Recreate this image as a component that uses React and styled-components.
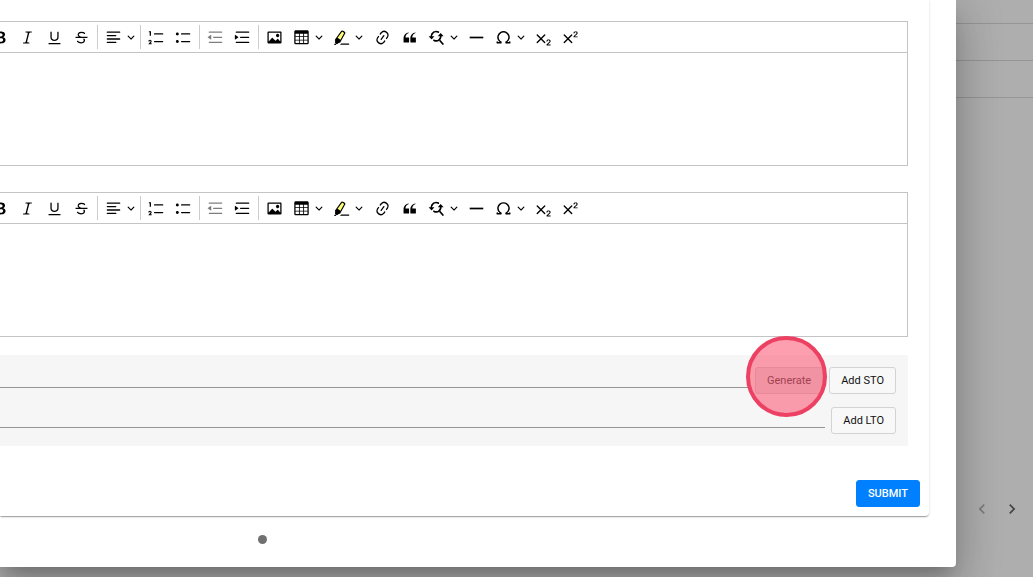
import React from 'react';
import styled, { createGlobalStyle } from 'styled-components';

const GlobalStyle = createGlobalStyle`
    * {
        box-sizing: border-box;
    }
    body {
        margin: 0;
        background: #aeaeae;
        font-family: Roboto, "Liberation Sans", sans-serif;
        overflow: hidden;
    }
`;

const Page = styled.div`
    display: flex;
    align-items: stretch;
    min-height: 100vh;
`;
const Dialog = styled.main`
    flex: 1;
    min-width: 0;
    align-self: flex-start;
    z-index: 1;
    padding-right: 27px;
    background: #fff;
    border-radius: 0 0 4px 0;
    box-shadow: 0 11px 15px -7px rgba(0, 0, 0, 0.2),
        0 24px 38px 3px rgba(0, 0, 0, 0.14),
        0 9px 46px 8px rgba(0, 0, 0, 0.12);
`;
const Card = styled.form`
    border-radius: 0 0 4px 0;
    box-shadow: 0 2px 1px -1px rgba(0, 0, 0, 0.2),
        0 1px 1px rgba(0, 0, 0, 0.14),
        0 1px 3px rgba(0, 0, 0, 0.12);
`;
const CardBody = styled.div`
    padding: 21px 21px 0 0;
`;

// Rich text editor
const Editor = styled.section`
    margin-bottom: ${props => (props.$last ? 18 : 26)}px;
    border: 1px solid #c4c4c4;
    border-left: none;
`;
const Toolbar = styled.div`
    display: flex;
    height: 31px;
    margin-left: -13px;
    border-bottom: 1px solid #c4c4c4;
`;
const Separator = styled.span`
    width: 1px;
    margin: 3px 2px;
    background: #ccc;
`;
const Tool = styled.button`
    display: flex;
    flex: none;
    align-items: center;
    gap: 5px;
    width: ${props => props.$width || 27}px;
    padding: 0 5px;
    border: none;
    background: none;
    color: #000;

    &:disabled {
        opacity: 0.5;
    }
`;
const Icon = styled.svg`
    flex: none;
    width: 17px;
    height: 17px;
    fill: currentColor;
`;
const Arrow = styled.svg`
    flex: none;
    width: 8px;
    height: 8px;
    fill: currentColor;
`;
const TextArea = styled.textarea`
    display: block;
    width: 100%;
    height: 112px;
    padding: 8px;
    border: none;
    outline: none;
    resize: none;
    font: 13px Roboto, sans-serif;
`;

// Objectives
const Objectives = styled.div`
    display: flex;
    flex-direction: column;
    gap: 13px;
    padding: 12px;
    background: #f6f6f6;
`;
const ObjectiveRow = styled.div`
    display: flex;
    align-items: flex-start;
    gap: 6px;
    margin-left: -12px;
`;
const LineInput = styled.input`
    flex: 1;
    min-width: 0;
    height: 21px;
    padding: 0;
    border: none;
    border-bottom: 1px solid #949494;
    border-radius: 0;
    outline: none;
    background: none;
    font: 13px Roboto, sans-serif;
`;
const Button = styled.button`
    height: 27px;
    padding: 0 11px;
    border: 1px solid #d3d3d3;
    border-radius: 3px;
    background: #f8f8f8;
    color: #111;
    font: 400 11px Roboto, sans-serif;
`;
const GenerateButton = styled(Button)`
    background: #e6e6e6;
    color: #444;
`;
const SubmitButton = styled(Button)`
    border-color: #0080ff;
    background: #0080ff;
    color: #fff;
    font-weight: 500;
`;
const Highlighted = styled.div`
    position: relative;
    display: flex;
`;
const Ring = styled.span`
    position: absolute;
    top: -31px;
    left: -9px;
    width: 81px;
    height: 81px;
    border: 4px solid #ec4163;
    border-radius: 50%;
    background: rgba(252, 64, 96, 0.5);
    pointer-events: none;
`;
const Actions = styled.div`
    display: flex;
    justify-content: flex-end;
    padding: 34px 9px 9px;
`;
const Steps = styled.div`
    display: flex;
    padding: 19px 0 23px 258px;
`;
const Dot = styled.span`
    width: 9px;
    height: 9px;
    border-radius: 50%;
    background: #707070;
`;

// Page behind the dialog
const Backdrop = styled.aside`
    display: flex;
    flex-direction: column;
    width: 77px;
`;
const BackRow = styled.div`
    height: ${props => props.$height || 37}px;
    border-bottom: 1px solid #959595;
`;
const Pager = styled.nav`
    display: flex;
    gap: 6px;
    margin: auto 0 56px 14px;
`;
const PageButton = styled.button`
    display: flex;
    align-items: center;
    justify-content: center;
    width: 24px;
    height: 24px;
    padding: 0;
    border: none;
    background: none;
    color: #444;

    &:disabled {
        color: #7b7b7b;
    }
`;
const Chevron = styled.svg`
    width: 20px;
    height: 20px;
    fill: currentColor;
`;

const two = 'M15.177 18.178h2.549c.254 0 .447.05.58.152a.49.49 0 0 1 .201.413.54.54 0 0 1-.159.393c-.105.108-.266.162-.48.162h-3.594c-.245 0-.435-.066-.572-.197a.621.621 0 0 1-.205-.463c0-.114.044-.265.132-.453a1.62 1.62 0 0 1 .288-.444c.433-.436.824-.81 1.172-1.122.348-.312.597-.517.747-.615.267-.183.49-.368.667-.553.177-.185.312-.375.405-.57.093-.194.139-.384.139-.57a1.008 1.008 0 0 0-.554-.917 1.197 1.197 0 0 0-.56-.133c-.426 0-.761.182-1.005.546a2.332 2.332 0 0 0-.164.39 1.609 1.609 0 0 1-.258.488c-.096.114-.237.17-.423.17a.558.558 0 0 1-.405-.156.568.568 0 0 1-.161-.427c0-.218.05-.446.151-.683.101-.238.252-.453.452-.646s.454-.349.762-.467a2.998 2.998 0 0 1 1.081-.178c.498 0 .923.076 1.274.228a1.916 1.916 0 0 1 1.004 1.032 1.984 1.984 0 0 1-.156 1.794c-.2.32-.405.572-.613.754-.208.182-.558.468-1.048.857-.49.39-.826.691-1.008.906a2.703 2.703 0 0 0-.24.309z';
const cross = 'm7.03 10.349 3.818-3.819a.8.8 0 1 1 1.132 1.132L8.16 11.48l3.819 3.818a.8.8 0 1 1-1.132 1.132L7.03 12.61l-3.818 3.82a.8.8 0 1 1-1.132-1.132L5.9 11.48 2.08 7.662A.8.8 0 1 1 3.212 6.53l3.818 3.82z';
const indentLines = 'M2 3.75c0 .414.336.75.75.75h14.5a.75.75 0 1 0 0-1.5H2.75a.75.75 0 0 0-.75.75zm5 6c0 .414.336.75.75.75h9.5a.75.75 0 1 0 0-1.5h-9.5a.75.75 0 0 0-.75.75zM2.75 16.5h14.5a.75.75 0 1 0 0-1.5H2.75a.75.75 0 1 0 0 1.5z';

const icons = {
  bold: <path d="M10.187 17H5.773c-.637 0-1.092-.138-1.364-.415-.273-.277-.409-.718-.409-1.323V4.738c0-.617.14-1.062.419-1.332.279-.27.73-.406 1.354-.406h4.68c.69 0 1.288.041 1.793.124.506.083.96.242 1.36.478.341.197.644.447.906.75a3.262 3.262 0 0 1 .808 2.162c0 1.401-.722 2.426-2.167 3.075C15.05 10.175 16 11.315 16 13.01a3.756 3.756 0 0 1-2.296 3.504 6.1 6.1 0 0 1-1.517.377c-.571.073-1.238.11-2 .11zm-.217-6.217H7v4.087h3.069c1.977 0 2.965-.69 2.965-2.072 0-.707-.256-1.22-.768-1.537-.512-.319-1.277-.478-2.296-.478zM7 5.13v3.619h2.606c.729 0 1.292-.067 1.69-.2a1.6 1.6 0 0 0 .91-.765c.165-.267.247-.566.247-.897 0-.707-.26-1.176-.778-1.409-.519-.232-1.31-.348-2.375-.348H7z" />,
  italic: <path d="m9.586 14.633.021.004c-.036.335.095.655.393.962.082.083.173.15.274.201h1.474a.6.6 0 1 1 0 1.2H5.304a.6.6 0 0 1 0-1.2h1.15c.474-.07.809-.182 1.005-.334.157-.122.291-.32.404-.597l2.416-9.55a1.053 1.053 0 0 0-.281-.823 1.12 1.12 0 0 0-.442-.296H8.15a.6.6 0 0 1 0-1.2h6.443a.6.6 0 1 1 0 1.2h-1.195c-.376.056-.65.155-.823.296-.215.175-.423.439-.623.79l-2.366 9.347z" />,
  underline: <path d="M3 18v-1.5h14V18zm2.2-8V3.6c0-.4.4-.6.8-.6.3 0 .7.2.7.6v6.2c0 2 1.3 2.8 3.2 2.8 1.9 0 3.4-.9 3.4-2.9V3.6c0-.3.4-.5.8-.5.3 0 .7.2.7.5V10c0 2.7-2.2 4-4.9 4-2.6 0-4.7-1.2-4.7-4z" />,
  strike: <path d="M7 16.4c-.8-.4-1.5-.9-2.2-1.5a.6.6 0 0 1-.2-.5l.3-.6h1c1 1.2 2.1 1.7 3.7 1.7 1 0 1.8-.3 2.3-.6.6-.4.6-1.2.6-1.3.2-1.2-.9-2.1-.9-2.1h2.1c.3.7.4 1.2.4 1.7v.8l-.6 1.2c-.6.8-1.1 1-1.6 1.2a6 6 0 0 1-2.4.6c-1 0-1.8-.3-2.5-.6zM6.8 9 6 8.3c-.4-.5-.5-.8-.5-1.6 0-.7.1-1.3.5-1.8.4-.6 1-1 1.6-1.3a6.3 6.3 0 0 1 4.7 0 4 4 0 0 1 1.7 1l.3.7c0 .1.2.4-.2.7-.4.2-.9.1-1 0a3 3 0 0 0-1.2-1c-.4-.2-1-.3-2-.4-.7 0-1.4.2-2 .6-.8.6-1 .8-1 1.5 0 .8.5 1 1.2 1.5.6.4 1.1.7 1.9 1H6.8zM3 10.5V9h14v1.5z" />,
  align: <path d="M2 3.75c0 .414.336.75.75.75h14.5a.75.75 0 1 0 0-1.5H2.75a.75.75 0 0 0-.75.75zm0 8c0 .414.336.75.75.75h14.5a.75.75 0 1 0 0-1.5H2.75a.75.75 0 0 0-.75.75zm0 4c0 .414.336.75.75.75h9.929a.75.75 0 1 0 0-1.5H2.75a.75.75 0 0 0-.75.75zm0-8c0 .414.336.75.75.75h9.929a.75.75 0 1 0 0-1.5H2.75a.75.75 0 0 0-.75.75z" />,
  numbered: <path d="M7 5.75c0 .414.336.75.75.75h9.5a.75.75 0 1 0 0-1.5h-9.5a.75.75 0 0 0-.75.75zM3.5 3v5H2V3.7H1v-1h2.5V3zM.343 17.857l2.59-3.257H2.92a.6.6 0 1 0-1.04 0H.302a2 2 0 1 1 3.995 0h-.001c-.048.405-.16.734-.333.988-.175.254-.59.692-1.244 1.312H4.3v1h-4l.043-.043zM7 14.75a.75.75 0 0 1 .75-.75h9.5a.75.75 0 1 1 0 1.5h-9.5a.75.75 0 0 1-.75-.75z" />,
  bulleted: <path d="M7 5.75c0 .414.336.75.75.75h9.5a.75.75 0 1 0 0-1.5h-9.5a.75.75 0 0 0-.75.75zm-6 0C1 4.784 1.777 4 2.75 4c.966 0 1.75.777 1.75 1.75 0 .966-.777 1.75-1.75 1.75C1.784 7.5 1 6.723 1 5.75zm6 9c0 .414.336.75.75.75h9.5a.75.75 0 1 0 0-1.5h-9.5a.75.75 0 0 0-.75.75zm-6 0c0-.966.777-1.75 1.75-1.75.966 0 1.75.777 1.75 1.75 0 .966-.777 1.75-1.75 1.75-.966 0-1.75-.777-1.75-1.75z" />,
  outdent: <path d={indentLines + 'M4.368 6.95.98 9.358a.4.4 0 0 0 .013.661l3.39 2.207A.4.4 0 0 0 5 11.892V7.275a.4.4 0 0 0-.632-.326z'} />,
  indent: <path d={indentLines + 'M1.632 6.95 5.02 9.358a.4.4 0 0 1-.013.661l-3.39 2.207A.4.4 0 0 1 1 11.892V7.275a.4.4 0 0 1 .632-.326z'} />,
  image: <path d="M6.91 10.54c.26-.23.64-.21.88.03l3.36 3.14 2.23-2.06a.64.64 0 0 1 .87 0l2.52 2.97V4.5H3.2v10.12l3.71-4.08zm10.27-7.51c.6 0 1.09.47 1.09 1.05v11.84c0 .59-.49 1.06-1.09 1.06H2.79c-.6 0-1.09-.47-1.09-1.06V4.08c0-.58.49-1.05 1.1-1.05h14.38zm-5.22 5.56a1.96 1.96 0 1 1 3.4-1.96 1.96 1.96 0 0 1-3.4 1.96z" />,
  table: <path d="M3 5.5v3h4v-3H3zm0 4v3h4v-3H3zm0 4v3h4v-3H3zm5 3h4v-3H8v3zm5 0h4v-3h-4v3zm4-4v-3h-4v3h4zm0-4v-3h-4v3h4zm1.5 8A1.5 1.5 0 0 1 17 18H3a1.5 1.5 0 0 1-1.5-1.5V3c.222-.863 1.068-1.5 2-1.5h13c.932 0 1.778.637 2 1.5v13.5zM12 12.5v-3H8v3h4zm0-4v-3H8v3h4z" />,
  highlight: (
    <>
      <path fill="#fdfd77" d="M10.798 1.59 3.002 12.875l1.895 1.852 2.521 1.402 6.997-12.194z" />
      <path d="m2.556 16.727.234-.348c-.297-.151-.462-.293-.498-.426-.036-.137.002-.416.115-.837.094-.25.15-.449.169-.595a4.495 4.495 0 0 0 0-.725c-.209-.621-.303-1.041-.284-1.26.02-.218.178-.506.475-.862l6.77-9.414c.539-.91 1.605-.85 3.199.18 1.594 1.032 2.188 1.928 1.784 2.686l-5.877 10.36c-.158.412-.333.673-.526.782-.193.108-.604.179-1.232.21-.362.131-.608.237-.738.318-.13.081-.305.238-.526.47-.293.265-.504.397-.632.397-.096 0-.27-.075-.524-.226l-.31.41-1.6-1.12zm-.279.415 1.575 1.103-.392.515H1.19l1.087-1.618zm8.1-13.656-4.953 6.9L8.75 12.57l4.247-7.574c.175-.25-.188-.647-1.092-1.192-.903-.546-1.412-.652-1.528-.318zM8.244 18.5 9.59 17h9.406v1.5H8.245z" />
    </>
  ),
  link: <path d="m11.077 15 .991-1.416a.75.75 0 1 1 1.229.86l-1.148 1.64a.748.748 0 0 1-.217.206 5.251 5.251 0 0 1-8.503-5.955.741.741 0 0 1 .12-.274l1.147-1.639a.75.75 0 1 1 1.228.86L4.933 10.7l.006.003a3.75 3.75 0 0 0 6.132 4.294l.006.004zm5.494-5.335a.748.748 0 0 1-.12.274l-1.147 1.639a.75.75 0 1 1-1.228-.86l.86-1.23a3.75 3.75 0 0 0-6.144-4.301l-.86 1.229a.75.75 0 0 1-1.229-.86l1.148-1.64a.748.748 0 0 1 .217-.206 5.251 5.251 0 0 1 8.503 5.955zm-4.563-2.532a.75.75 0 0 1 .184 1.045l-3.155 4.505a.75.75 0 1 1-1.229-.86l3.155-4.506a.75.75 0 0 1 1.045-.184z" />,
  quote: <path d="M3 10.423a6.5 6.5 0 0 1 6.056-6.408l.038.67C6.448 5.423 5.354 7.663 5.22 10H9c.552 0 .5.432.5.986v4.511c0 .554-.448.503-1 .503h-5c-.552 0-.5-.449-.5-1.003v-4.574zm8 0a6.5 6.5 0 0 1 6.056-6.408l.038.67c-2.646.739-3.74 2.979-3.873 5.315H17c.552 0 .5.432.5.986v4.511c0 .554-.448.503-1 .503h-5c-.552 0-.5-.449-.5-1.003v-4.574z" />,
  replace: (
    <>
      <path d="m12.87 13.786 1.532-1.286 3.857 4.596a1 1 0 1 1-1.532 1.286l-3.857-4.596z" />
      <path d="M16.004 8.5a6.5 6.5 0 0 1-9.216 5.905c-1.154-.53-.863-1.415-.663-1.615.194-.194.564-.592 1.635-.141a4.5 4.5 0 0 0 5.89-5.904l-.104-.227 1.332-1.331c.045-.046.196-.041.224.007a6.47 6.47 0 0 1 .902 3.306zm-3.4-5.715c.562.305.742 1.106.354 1.494-.388.388-.995.414-1.476.178a4.5 4.5 0 0 0-6.086 5.882l.114.236-1.348 1.349c-.038.037-.17.022-.198-.023a6.5 6.5 0 0 1 5.54-9.9 6.469 6.469 0 0 1 3.1.784z" />
      <path d="M4.001 11.93.948 8.877a.2.2 0 0 1 .141-.341h6.106a.2.2 0 0 1 .141.341L4.283 11.93a.2.2 0 0 1-.282 0zm11.083-6.789 3.053 3.053a.2.2 0 0 1-.14.342H11.89a.2.2 0 0 1-.14-.342l3.052-3.053a.2.2 0 0 1 .282 0z" />
    </>
  ),
  rule: <path d="M2 9h16v2H2z" />,
  omega: <path d="M10 2.5a7.47 7.47 0 0 1 4.231 1.31 7.268 7.268 0 0 1 2.703 3.454 7.128 7.128 0 0 1 .199 4.353c-.39 1.436-1.475 2.72-2.633 3.677h2.013c0-.226.092-.443.254-.603a.876.876 0 0 1 1.229 0c.163.16.254.377.254.603v.853c0 .209-.078.41-.22.567a.873.873 0 0 1-.547.28l-.101.006h-4.695a.517.517 0 0 1-.516-.518v-1.265c0-.21.128-.398.317-.489a5.601 5.601 0 0 0 2.492-2.371 5.459 5.459 0 0 0 .552-3.693 5.53 5.53 0 0 0-1.955-3.2A5.71 5.71 0 0 0 10 4.206 5.708 5.708 0 0 0 6.419 5.46 5.527 5.527 0 0 0 4.46 8.663a5.457 5.457 0 0 0 .554 3.695 5.6 5.6 0 0 0 2.497 2.37.55.55 0 0 1 .317.49v1.264c0 .286-.23.518-.516.518H2.618a.877.877 0 0 1-.614-.25.845.845 0 0 1-.254-.603v-.853c0-.226.091-.443.254-.603a.876.876 0 0 1 1.228 0c.163.16.255.377.255.603h1.925c-1.158-.958-2.155-2.241-2.545-3.678a7.128 7.128 0 0 1 .199-4.352 7.268 7.268 0 0 1 2.703-3.455A7.475 7.475 0 0 1 10 2.5z" />,
  sub: (
    <>
      <path d={cross} />
      <path d={two} />
    </>
  ),
  sup: (
    <>
      <path d={cross} />
      <path d={two} transform="translate(0 -9.5)" />
    </>
  ),
};

const tools = [
  { icon: 'bold', label: 'Bold' },
  { icon: 'italic', label: 'Italic' },
  { icon: 'underline', label: 'Underline' },
  { icon: 'strike', label: 'Strikethrough' },
  null,
  { icon: 'align', label: 'Text alignment', width: 38 },
  null,
  { icon: 'numbered', label: 'Numbered List' },
  { icon: 'bulleted', label: 'Bulleted List' },
  null,
  { icon: 'outdent', label: 'Decrease indent', disabled: true },
  { icon: 'indent', label: 'Increase indent' },
  null,
  { icon: 'image', label: 'Insert image' },
  { icon: 'table', label: 'Insert table', width: 40 },
  { icon: 'highlight', label: 'Highlight', width: 41 },
  { icon: 'link', label: 'Link' },
  { icon: 'quote', label: 'Block quote' },
  { icon: 'replace', label: 'Find and replace', width: 40 },
  { icon: 'rule', label: 'Horizontal line' },
  { icon: 'omega', label: 'Special characters', width: 40 },
  { icon: 'sub', label: 'Subscript' },
  { icon: 'sup', label: 'Superscript' },
];

const RichText = props => {
  return (
    <Editor $last={props.last}>
      <Toolbar role="toolbar" aria-label="Editor toolbar">
        {tools.map((tool, i) => tool ? (
          <Tool key={i} type="button" aria-label={tool.label} disabled={tool.disabled} $width={tool.width}>
            <Icon viewBox="0 0 20 20">{icons[tool.icon]}</Icon>
            {tool.width && (
              <Arrow viewBox="0 0 10 10">
                <path d="M.941 4.523a.75.75 0 1 1 1.06-1.06l3.006 3.005 3.005-3.005a.75.75 0 1 1 1.06 1.06l-3.549 3.55a.75.75 0 0 1-1.168-.136L.941 4.523z" />
              </Arrow>
            )}
          </Tool>
        ) : <Separator key={i} />)}
      </Toolbar>
      <TextArea aria-label={props.label} />
    </Editor>
  );
};

const App = () => {
  return (
    <Page>
      <GlobalStyle />
      <Dialog>
        <Card onSubmit={e => e.preventDefault()}>
          <CardBody>
            <RichText label="Description" />
            <RichText label="Notes" last />
            <Objectives>
              <ObjectiveRow>
                <LineInput type="text" aria-label="STO" />
                <Highlighted>
                  <GenerateButton type="button">Generate</GenerateButton>
                  <Ring />
                </Highlighted>
                <Button type="button">Add STO</Button>
              </ObjectiveRow>
              <ObjectiveRow>
                <LineInput type="text" aria-label="LTO" />
                <Button type="button">Add LTO</Button>
              </ObjectiveRow>
            </Objectives>
          </CardBody>
          <Actions>
            <SubmitButton type="submit">SUBMIT</SubmitButton>
          </Actions>
        </Card>
        <Steps>
          <Dot />
        </Steps>
      </Dialog>
      <Backdrop>
        <BackRow $height={24} />
        <BackRow />
        <BackRow />
        <Pager aria-label="Pagination">
          <PageButton type="button" aria-label="Previous page" disabled>
            <Chevron viewBox="0 0 24 24">
              <path d="M15.41 7.41 14 6l-6 6 6 6 1.41-1.41L10.83 12z" />
            </Chevron>
          </PageButton>
          <PageButton type="button" aria-label="Next page">
            <Chevron viewBox="0 0 24 24">
              <path d="M10 6 8.59 7.41 13.17 12l-4.58 4.59L10 18l6-6z" />
            </Chevron>
          </PageButton>
        </Pager>
      </Backdrop>
    </Page>
  );
};

export default App;
